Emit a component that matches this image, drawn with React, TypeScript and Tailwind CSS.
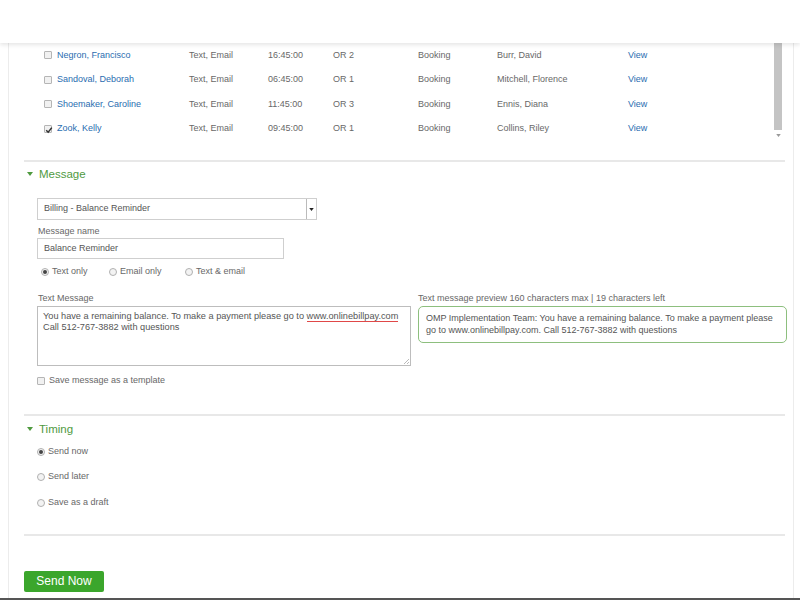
import React from "react";

type Row = {
    name: string;
    channel: string;
    time: string;
    room: string;
    type: string;
    provider: string;
    checked?: boolean;
};

const rows: Row[] = [
    { name: "Negron, Francisco", channel: "Text, Email", time: "16:45:00", room: "OR 2", type: "Booking", provider: "Burr, David" },
    { name: "Sandoval, Deborah", channel: "Text, Email", time: "06:45:00", room: "OR 1", type: "Booking", provider: "Mitchell, Florence" },
    { name: "Shoemaker, Caroline", channel: "Text, Email", time: "11:45:00", room: "OR 3", type: "Booking", provider: "Ennis, Diana" },
    { name: "Zook, Kelly", channel: "Text, Email", time: "09:45:00", room: "OR 1", type: "Booking", provider: "Collins, Riley", checked: true },
];

const Checkbox: React.FC<{ checked?: boolean }> = ({ checked }) => (
    <span className="relative inline-block w-[8px] h-[8px] border border-[#b5b5b5] bg-[#f1f1f1] rounded-[1px] shrink-0">
        {checked && (
            <svg viewBox="0 0 8 8" className="absolute left-0 top-0 w-[8px] h-[8px]">
                <path d="M1.2 4.2 L3.2 6.2 L6.8 1.6" fill="none" stroke="#333" strokeWidth="1.5" />
            </svg>
        )}
    </span>
);

const Radio: React.FC<{ selected?: boolean }> = ({ selected }) => (
    <span className="inline-flex items-center justify-center w-[8px] h-[8px] rounded-full border border-[#b0b0b0] bg-[#f3f3f3] shrink-0">
        {selected && <span className="w-[4px] h-[4px] rounded-full bg-[#444]" />}
    </span>
);

const SectionTitle: React.FC<{ label: string }> = ({ label }) => (
    <div className="flex items-center h-[14px] pl-[3px] text-[#4f9a3f]">
        <svg viewBox="0 0 6 6" className="w-[6px] h-[6px] mr-[6px]">
            <path d="M0 1 L6 1 L3 5 Z" fill="#4f9a3f" />
        </svg>
        <span className="text-[11.5px] leading-[14px]">{label}</span>
    </div>
);

const Divider: React.FC = () => <div className="h-[2px] bg-[#e8e8e8] mr-[8px]" />;

const App: React.FC = () => {
    return (
        <div className="w-[800px] h-[600px] overflow-hidden bg-white flex flex-col font-['Liberation_Sans',Arial,sans-serif] text-[#686868]">
            <header className="h-[43px] shrink-0 bg-white relative z-10 shadow-[0_2px_4px_rgba(0,0,0,0.10)]" />

            <div className="flex-1 flex flex-col ml-[8px] mr-[6px] border-l border-r border-[#ececec] pl-[15px]">
                {/* patient list */}
                <div className="relative h-[100px] flex">
                    <div className="flex-1 text-[9px]">
                        {rows.map((r) => (
                            <div key={r.name} className="flex items-center h-[24.5px]">
                                <span className="w-[20px]" />
                                <span className="w-[13px] flex items-center">
                                    <Checkbox checked={r.checked} />
                                </span>
                                <span className="w-[132px] text-[#2a6db0]">{r.name}</span>
                                <span className="w-[79px]">{r.channel}</span>
                                <span className="w-[65px]">{r.time}</span>
                                <span className="w-[85px]">{r.room}</span>
                                <span className="w-[79px]">{r.type}</span>
                                <span className="w-[131px]">{r.provider}</span>
                                <span className="text-[#2a6db0]">View</span>
                            </div>
                        ))}
                    </div>
                    <div className="w-[8px] mr-[11px] flex flex-col">
                        <div className="h-[87px] bg-[#c4c4c4]" />
                        <div className="h-[10px] flex items-center justify-center">
                            <svg viewBox="0 0 6 4" className="w-[5px] h-[3px]">
                                <path d="M0 0 L6 0 L3 4 Z" fill="#999" />
                            </svg>
                        </div>
                    </div>
                </div>

                <div className="mt-[17px]">
                    <Divider />
                </div>

                {/* message */}
                <div className="mt-[5px]">
                    <SectionTitle label="Message" />
                </div>
                <div className="pl-[13px] text-[9px]">
                    <div className="mt-[17px] flex w-[280px] h-[22px] border border-[#cfcfcf] bg-white">
                        <span className="flex-1 flex items-center pl-[6px] text-[#555]">Billing - Balance Reminder</span>
                        <span className="w-[10px] border-l border-[#bbb] flex items-center justify-center">
                            <svg viewBox="0 0 6 4" className="w-[5px] h-[3px]">
                                <path d="M0 0 L6 0 L3 4 Z" fill="#222" />
                            </svg>
                        </span>
                    </div>
                    <div className="mt-[6px] leading-[11px] pl-[1px]">Message name</div>
                    <div className="mt-[1px] w-[247px] h-[21px] border border-[#cfcfcf] flex items-center pl-[6px] text-[#555]">
                        Balance Reminder
                    </div>
                    <div className="mt-[7px] h-[12px] flex items-center pl-[4px]">
                        <Radio selected />
                        <span className="ml-[3px] w-[57px]">Text only</span>
                        <Radio />
                        <span className="ml-[3px] w-[65px]">Email only</span>
                        <Radio />
                        <span className="ml-[3px]">Text &amp; email</span>
                    </div>

                    <div className="mt-[15px] flex gap-[7px]">
                        <div className="w-[374px]">
                            <div className="leading-[11px] pl-[1px]">Text Message</div>
                            <div className="relative mt-[1.5px] h-[60px] border border-[#bdbdbd] px-[5px] pt-[4px] text-[9.2px] leading-[10px] text-[#555]">
                                You have a remaining balance. To make a payment please go to{" "}
                                <span className="inline-block leading-[9px] border-b border-[#e04848]">www.onlinebillpay.com</span>
                                <br />
                                Call 512-767-3882 with questions
                                <svg viewBox="0 0 6 6" className="absolute right-[1px] bottom-[1px] w-[6px] h-[6px]">
                                    <path d="M6 1 L1 6 M6 4 L4 6" stroke="#aaa" strokeWidth="0.8" />
                                </svg>
                            </div>
                        </div>
                        <div className="w-[369px]">
                            <div className="leading-[11px]">Text message preview 160 characters max | 19 characters left</div>
                            <div className="mt-[1.5px] h-[37px] border border-[#8dbf7e] rounded-[5px] px-[7px] pt-[5px] leading-[12px] text-[#555]">
                                OMP Implementation Team: You have a remaining balance. To make a payment please go to www.onlinebillpay.com. Call 512-767-3882 with questions
                            </div>
                        </div>
                    </div>

                    <div className="mt-[9px] h-[12px] flex items-center">
                        <Checkbox />
                        <span className="ml-[4px]">Save message as a template</span>
                    </div>
                </div>

                <div className="mt-[27px]">
                    <Divider />
                </div>

                {/* timing */}
                <div className="mt-[6px]">
                    <SectionTitle label="Timing" />
                </div>
                <div className="pl-[13px] text-[9px] flex flex-col gap-[13.5px] mt-[10px]">
                    <div className="h-[12px] flex items-center">
                        <Radio selected />
                        <span className="ml-[3px]">Send now</span>
                    </div>
                    <div className="h-[12px] flex items-center">
                        <Radio />
                        <span className="ml-[3px]">Send later</span>
                    </div>
                    <div className="h-[12px] flex items-center">
                        <Radio />
                        <span className="ml-[3px]">Save as a draft</span>
                    </div>
                </div>

                <div className="mt-[25px]">
                    <Divider />
                </div>

                <div className="mt-[32px]">
                    <button className="w-[80px] h-[21px] rounded-[2px] bg-[#3ba62c] text-white text-[12px] leading-[21px]">
                        Send Now
                    </button>
                </div>
            </div>
            <div className="h-[2px] shrink-0 bg-[#555]" />
        </div>
    );
};

export default App;
